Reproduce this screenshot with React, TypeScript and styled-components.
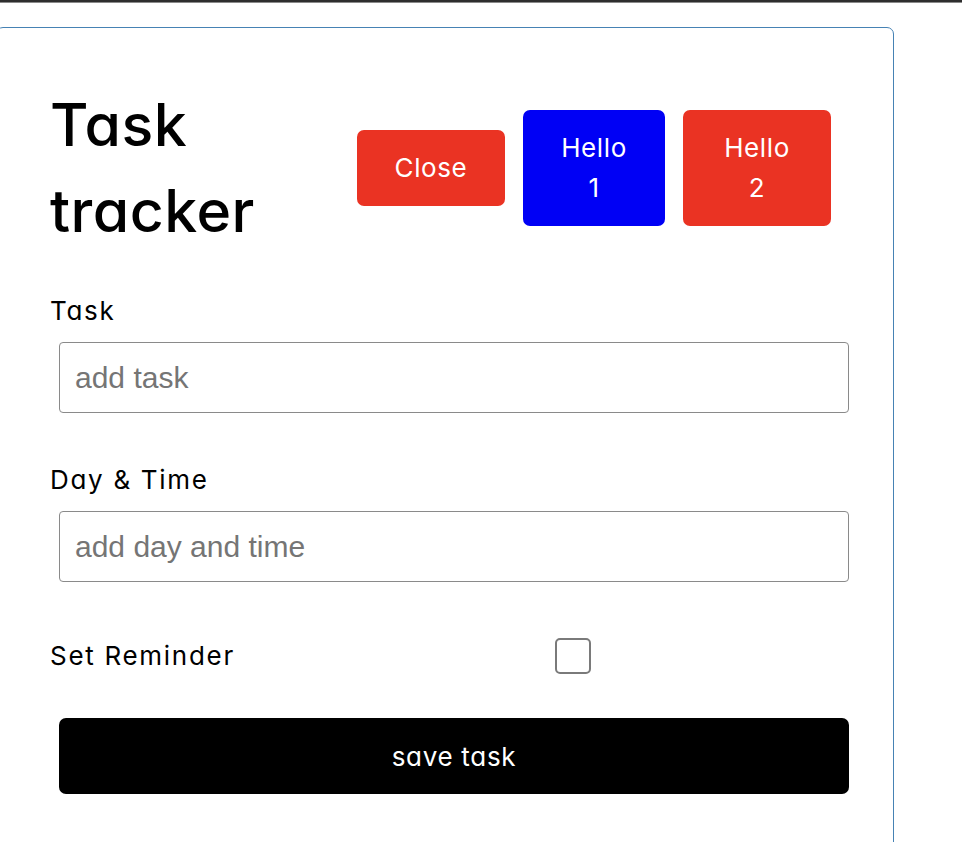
import React from "react";
import styled, { createGlobalStyle } from "styled-components";

const GlobalStyle = createGlobalStyle`
  html, body {
    margin: 0;
    padding: 0;
    background: #ffffff;
    overflow: hidden;
  }
  body {
    font-family: Inter, "Noto Sans", sans-serif;
    font-feature-settings: "cv11" 1;
    color: #000000;
  }
`;

const TopBar = styled.div`
  height: 2px;
  background: #2e2e2e;
  border-bottom: 1px solid #8a8a8a;
`;

const Card = styled.div`
  margin: 24px 0 0 -4px;
  width: 898px;
  min-height: 860px;
  box-sizing: border-box;
  border: 1px solid #4682b4;
  border-radius: 7px;
  padding: 54px 44px 40px 53px;
`;

const Header = styled.header`
  display: flex;
  align-items: center;
  justify-content: space-between;
  margin-bottom: 37px;
`;

const Title = styled.h1`
  margin: 0;
  width: min-content;
  font-size: 59px;
  line-height: 86px;
  font-weight: 500;
  letter-spacing: 0.5px;
`;

const ButtonGroup = styled.div`
  display: flex;
  align-items: center;
  gap: 18px;
  margin-right: 18px;
`;

const Btn = styled.button<{ $bg: string; $w: number }>`
  width: ${(p) => p.$w}px;
  padding: 18px 0;
  border: none;
  border-radius: 7px;
  background: ${(p) => p.$bg};
  color: #ffffff;
  font-family: Inter, "Noto Sans", sans-serif;
  font-feature-settings: "cv11" 1;
  font-size: 26px;
  line-height: 40px;
  font-weight: 400;
  letter-spacing: 0.6px;
  cursor: pointer;
  text-align: center;
`;

const Form = styled.form`
  display: flex;
  flex-direction: column;
`;

const FormControl = styled.div<{ $below: number }>`
  display: flex;
  flex-direction: column;
  margin-bottom: ${(p) => p.$below}px;
`;

const Label = styled.label`
  display: block;
  font-size: 26px;
  line-height: 39px;
  font-weight: 400;
  letter-spacing: 1.7px;
`;

const TextInput = styled.input`
  margin: 12px 0 0 9px;
  height: 71px;
  box-sizing: border-box;
  border: 1px solid #8a8a8a;
  border-radius: 4px;
  padding: 0 15px;
  font-family: "Liberation Sans", Arial, sans-serif;
  font-size: 30px;
  color: #000;
  outline: none;
  &::placeholder {
    color: #757575;
  }
`;

const CheckRow = styled.div`
  display: flex;
  align-items: center;
  height: 39px;
  margin-bottom: 43px;
`;

const CheckLabel = styled(Label)`
  flex: 0 0 247px;
`;

const CheckArea = styled.div`
  flex: 1;
  display: flex;
  justify-content: center;
`;

const CheckBox = styled.input`
  appearance: none;
  margin: 0;
  width: 36px;
  height: 36px;
  box-sizing: border-box;
  border: 2px solid #7a7a7a;
  border-radius: 5px;
  background: #fff;
`;

const SaveButton = styled.button`
  margin-left: 9px;
  height: 76px;
  border: none;
  border-radius: 7px;
  background: #000000;
  color: #ffffff;
  font-family: Inter, "Noto Sans", sans-serif;
  font-feature-settings: "cv11" 1;
  font-size: 26px;
  letter-spacing: 0.7px;
  cursor: pointer;
`;

export default function App() {
  return (
    <>
      <GlobalStyle />
      <TopBar />
      <Card>
        <Header>
          <Title>Task tracker</Title>
          <ButtonGroup>
            <Btn $bg="#ea3323" $w={148}>Close</Btn>
            <Btn $bg="#0000f5" $w={142}>
              Hello
              <br />1
            </Btn>
            <Btn $bg="#ea3323" $w={148}>
              Hello
              <br />2
            </Btn>
          </ButtonGroup>
        </Header>
        <Form onSubmit={(e) => e.preventDefault()}>
          <FormControl $below={47}>
            <Label>Task</Label>
            <TextInput type="text" placeholder="add task" />
          </FormControl>
          <FormControl $below={54}>
            <Label>Day &amp; Time</Label>
            <TextInput type="text" placeholder="add day and time" />
          </FormControl>
          <CheckRow>
            <CheckLabel>Set Reminder</CheckLabel>
            <CheckArea>
              <CheckBox type="checkbox" />
            </CheckArea>
          </CheckRow>
          <SaveButton type="submit">save task</SaveButton>
        </Form>
      </Card>
    </>
  );
}
